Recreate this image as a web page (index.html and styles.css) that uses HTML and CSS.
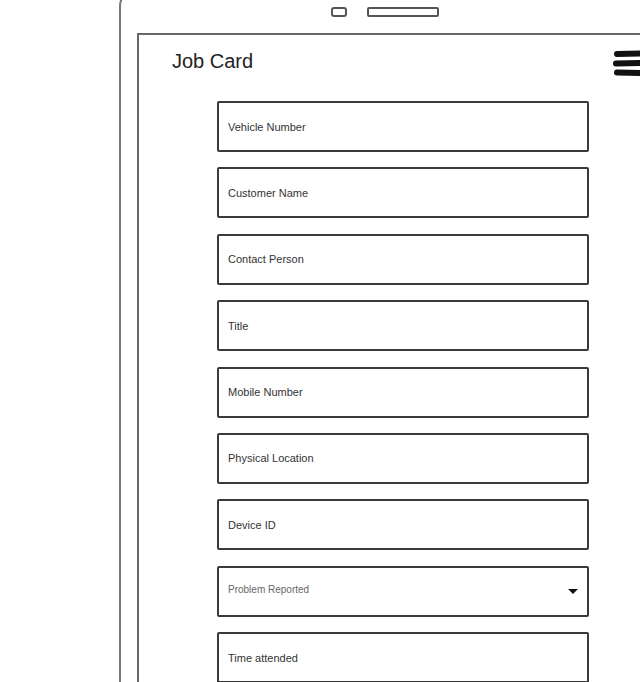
FILE: index.html
```html
<!DOCTYPE html>
<html>
<head>
<meta charset="utf-8">
<link rel="stylesheet" href="styles.css">
</head>
<body>
<div class="device">
  <div class="sensors">
    <span class="cam"></span>
    <span class="speaker"></span>
  </div>
  <div class="screen">
    <div class="header">
      <span class="title">Job Card</span>
      <svg class="menu" width="27" height="28" viewBox="0 0 27 28">
        <path d="M4 4 L27 3.5 M3 13.5 L27 13 M4 22.5 L27 23" stroke="#111" stroke-width="6" stroke-linecap="round" fill="none"/>
      </svg>
    </div>
    <div class="form">
      <div class="field">Vehicle Number</div>
      <div class="field">Customer Name</div>
      <div class="field">Contact Person</div>
      <div class="field">Title</div>
      <div class="field">Mobile Number</div>
      <div class="field">Physical Location</div>
      <div class="field">Device ID</div>
      <div class="field select"><span class="ph">Problem Reported</span><span class="caret"></span></div>
      <div class="field">Time attended</div>
    </div>
  </div>
</div>
</body>
</html>
```
FILE: styles.css
```css
html, body {
  margin: 0;
  padding: 0;
  background: #fff;
  overflow: hidden;
  width: 640px;
  height: 682px;
}
body {
  font-family: "Liberation Sans", "DejaVu Sans", sans-serif;
  color: #333;
}
.device {
  margin-left: 119px;
  margin-top: -10px;
  width: 521px;
  height: 692px;
  border: 2px solid #777;
  border-right: none;
  border-bottom: none;
  border-top-left-radius: 16px;
  box-sizing: border-box;
  padding-top: 15px;
  overflow: hidden;
}
.sensors {
  display: flex;
  gap: 20px;
  margin-left: 210px;
  height: 10px;
}
.cam {
  width: 16px;
  height: 10px;
  box-sizing: border-box;
  border: 2px solid #555;
  border-radius: 3px;
}
.speaker {
  width: 72px;
  height: 10px;
  box-sizing: border-box;
  border: 2px solid #555;
  border-radius: 2px;
}
.screen {
  margin-top: 16px;
  margin-left: 16px;
  width: 503px;
  height: 649px;
  border: 2px solid #666;
  border-right: none;
  border-bottom: none;
  box-sizing: border-box;
  overflow: hidden;
}
.header {
  display: flex;
  justify-content: space-between;
  align-items: flex-start;
  padding-left: 33px;
  padding-top: 12px;
  height: 31px;
}
.title {
  font-size: 20px;
  line-height: 24px;
  color: #222;
  padding-top: 2px;
}
.menu {
  margin-top: 3px;
}
.form {
  margin-top: 23px;
  margin-left: 78px;
  width: 372px;
  display: flex;
  flex-direction: column;
  gap: 15.4px;
}
.field {
  flex: none;
  height: 51px;
  box-sizing: border-box;
  border: 2px solid #3a3a3a;
  border-radius: 2px;
  display: flex;
  align-items: center;
  padding-left: 9px;
  font-size: 11px;
  color: #333;
}
.select {
  justify-content: space-between;
  padding-right: 9px;
}
.ph {
  font-size: 10px;
  color: #666;
  margin-top: -3px;
}
.caret {
  width: 0;
  height: 0;
  border-left: 5px solid transparent;
  border-right: 5px solid transparent;
  border-top: 5px solid #111;
}
```
